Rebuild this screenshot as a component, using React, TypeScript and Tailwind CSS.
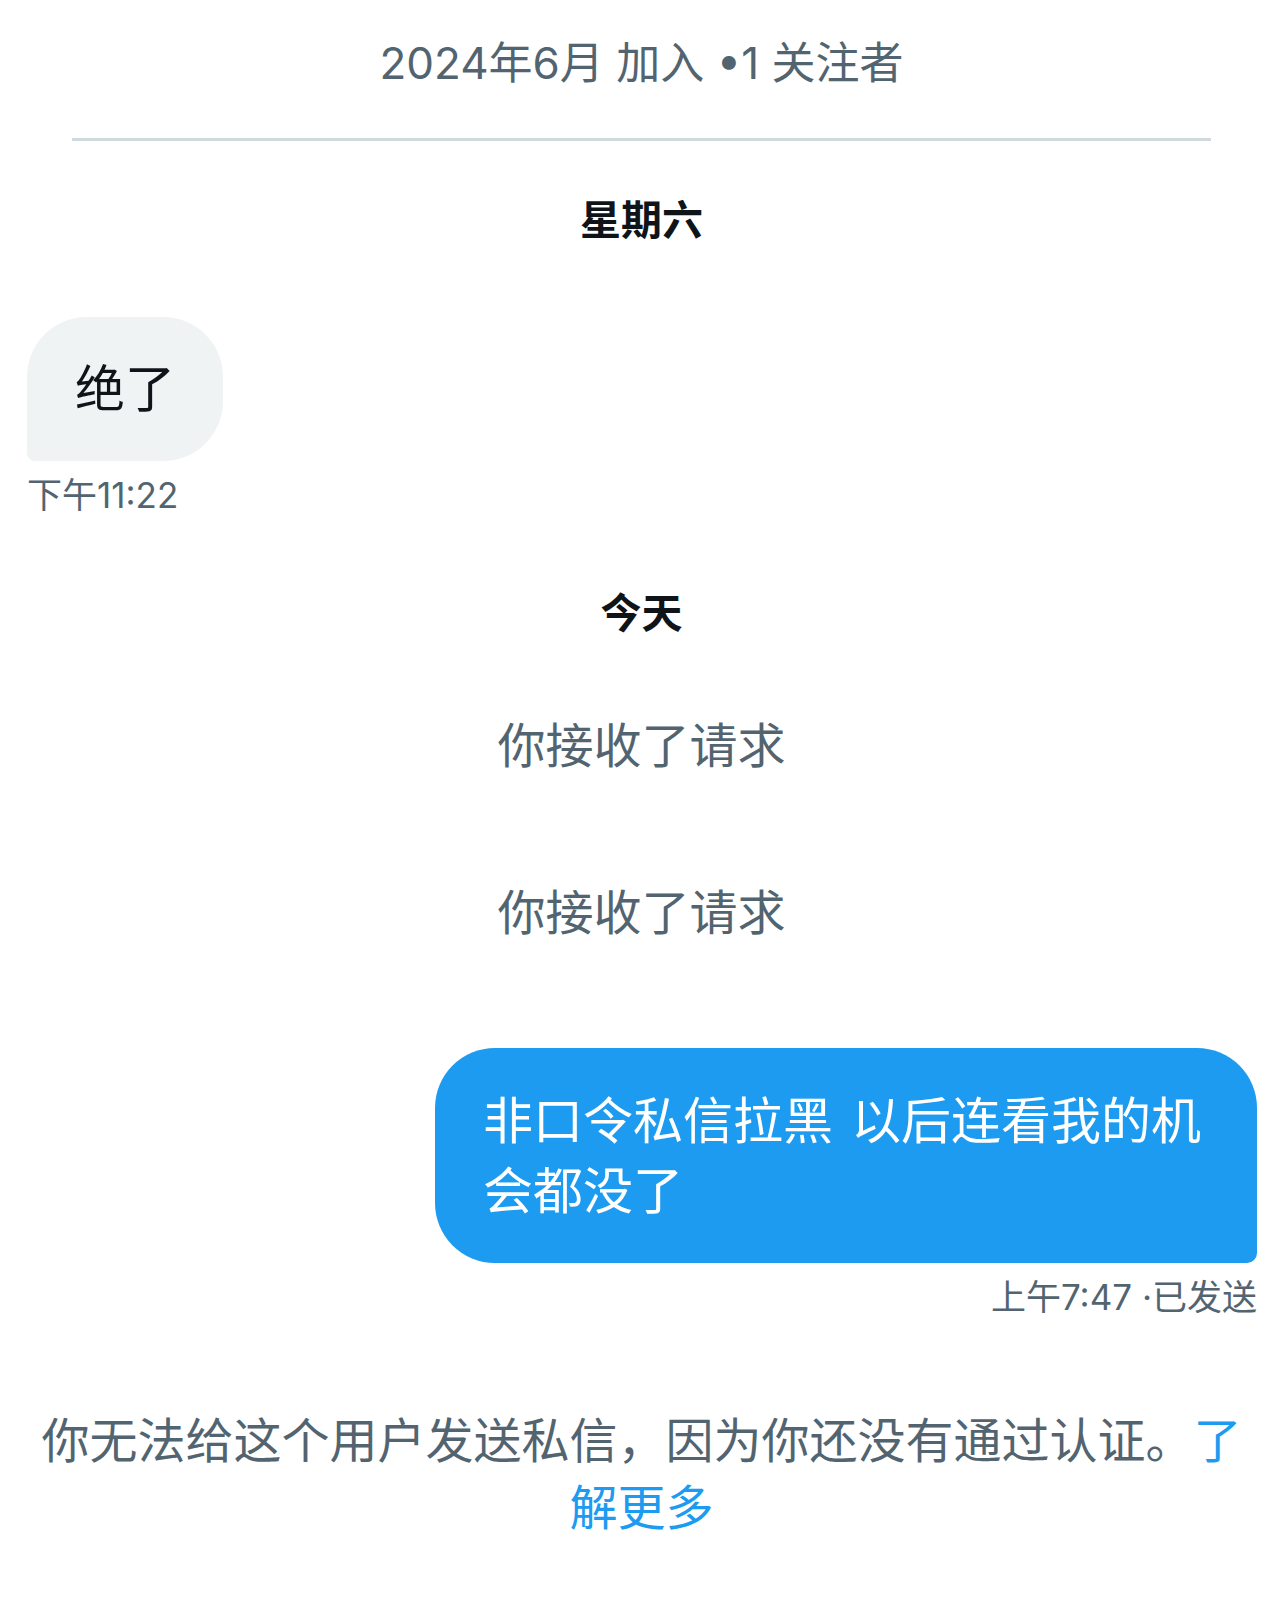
const font = { fontFamily: '"Inter", "Noto Sans CJK SC", sans-serif' };

const DayLabel = ({ label, className }: { label: string; className: string }) => (
  <div className={`text-center text-[41px] leading-[50px] font-bold text-[#0f1419] ${className}`}>{label}</div>
);

const Notice = ({ text, className }: { text: string; className: string }) => (
  <div className={`text-center text-[48px] leading-[60px] text-[#536471] ${className}`}>{text}</div>
);

export default function App() {
  return (
    <div className="min-h-[1615px] w-full bg-white flex flex-col" style={font}>
      {/* profile summary */}
      <div className="pt-[35px] text-center text-[44px] leading-[56px] text-[#536471]">
        2024年6月 加入 •1 关注者
      </div>
      <div className="mt-[47px] mx-[72px] h-[3px] bg-[#cfd9de]" />

      <DayLabel label="星期六" className="mt-[54px]" />

      {/* incoming message */}
      <div className="mt-[72px] ml-[27px] flex flex-col items-start">
        <div className="bg-[#eff3f4] text-[#0f1419] text-[50px] leading-[70px] px-[48px] py-[37px] rounded-[60px] rounded-bl-[8px]">
          绝了
        </div>
        <div className="mt-[12px] text-[35px] leading-[44px] text-[#536471]">下午11:22</div>
      </div>

      <DayLabel label="今天" className="mt-[71px]" />

      <Notice text="你接收了请求" className="mt-[78px]" />
      <Notice text="你接收了请求" className="mt-[107px]" />

      {/* outgoing message */}
      <div className="mt-[105px] mr-[26px] flex flex-col items-end">
        <div className="max-w-[822px] bg-[#1d9bf0] text-white text-[50px] leading-[70px] pl-[48px] pr-[48px] pt-[38px] pb-[37px] rounded-[60px] rounded-br-[10px] [word-spacing:4px]">
          非口令私信拉黑 以后连看我的机会都没了
        </div>
        <div className="mt-[12px] text-[35px] leading-[44px] text-[#536471]">上午7:47 ·已发送</div>
      </div>

      {/* composer disabled notice */}
      <div className="mt-[88px] px-[40px] text-center text-[48px] leading-[67px] text-[#536471]">
        你无法给这个用户发送私信，因为你还没有通过认证。<span className="text-[#1d9bf0]">了</span>
        <br />
        <span className="text-[#1d9bf0]">解更多</span>
      </div>
    </div>
  );
}
